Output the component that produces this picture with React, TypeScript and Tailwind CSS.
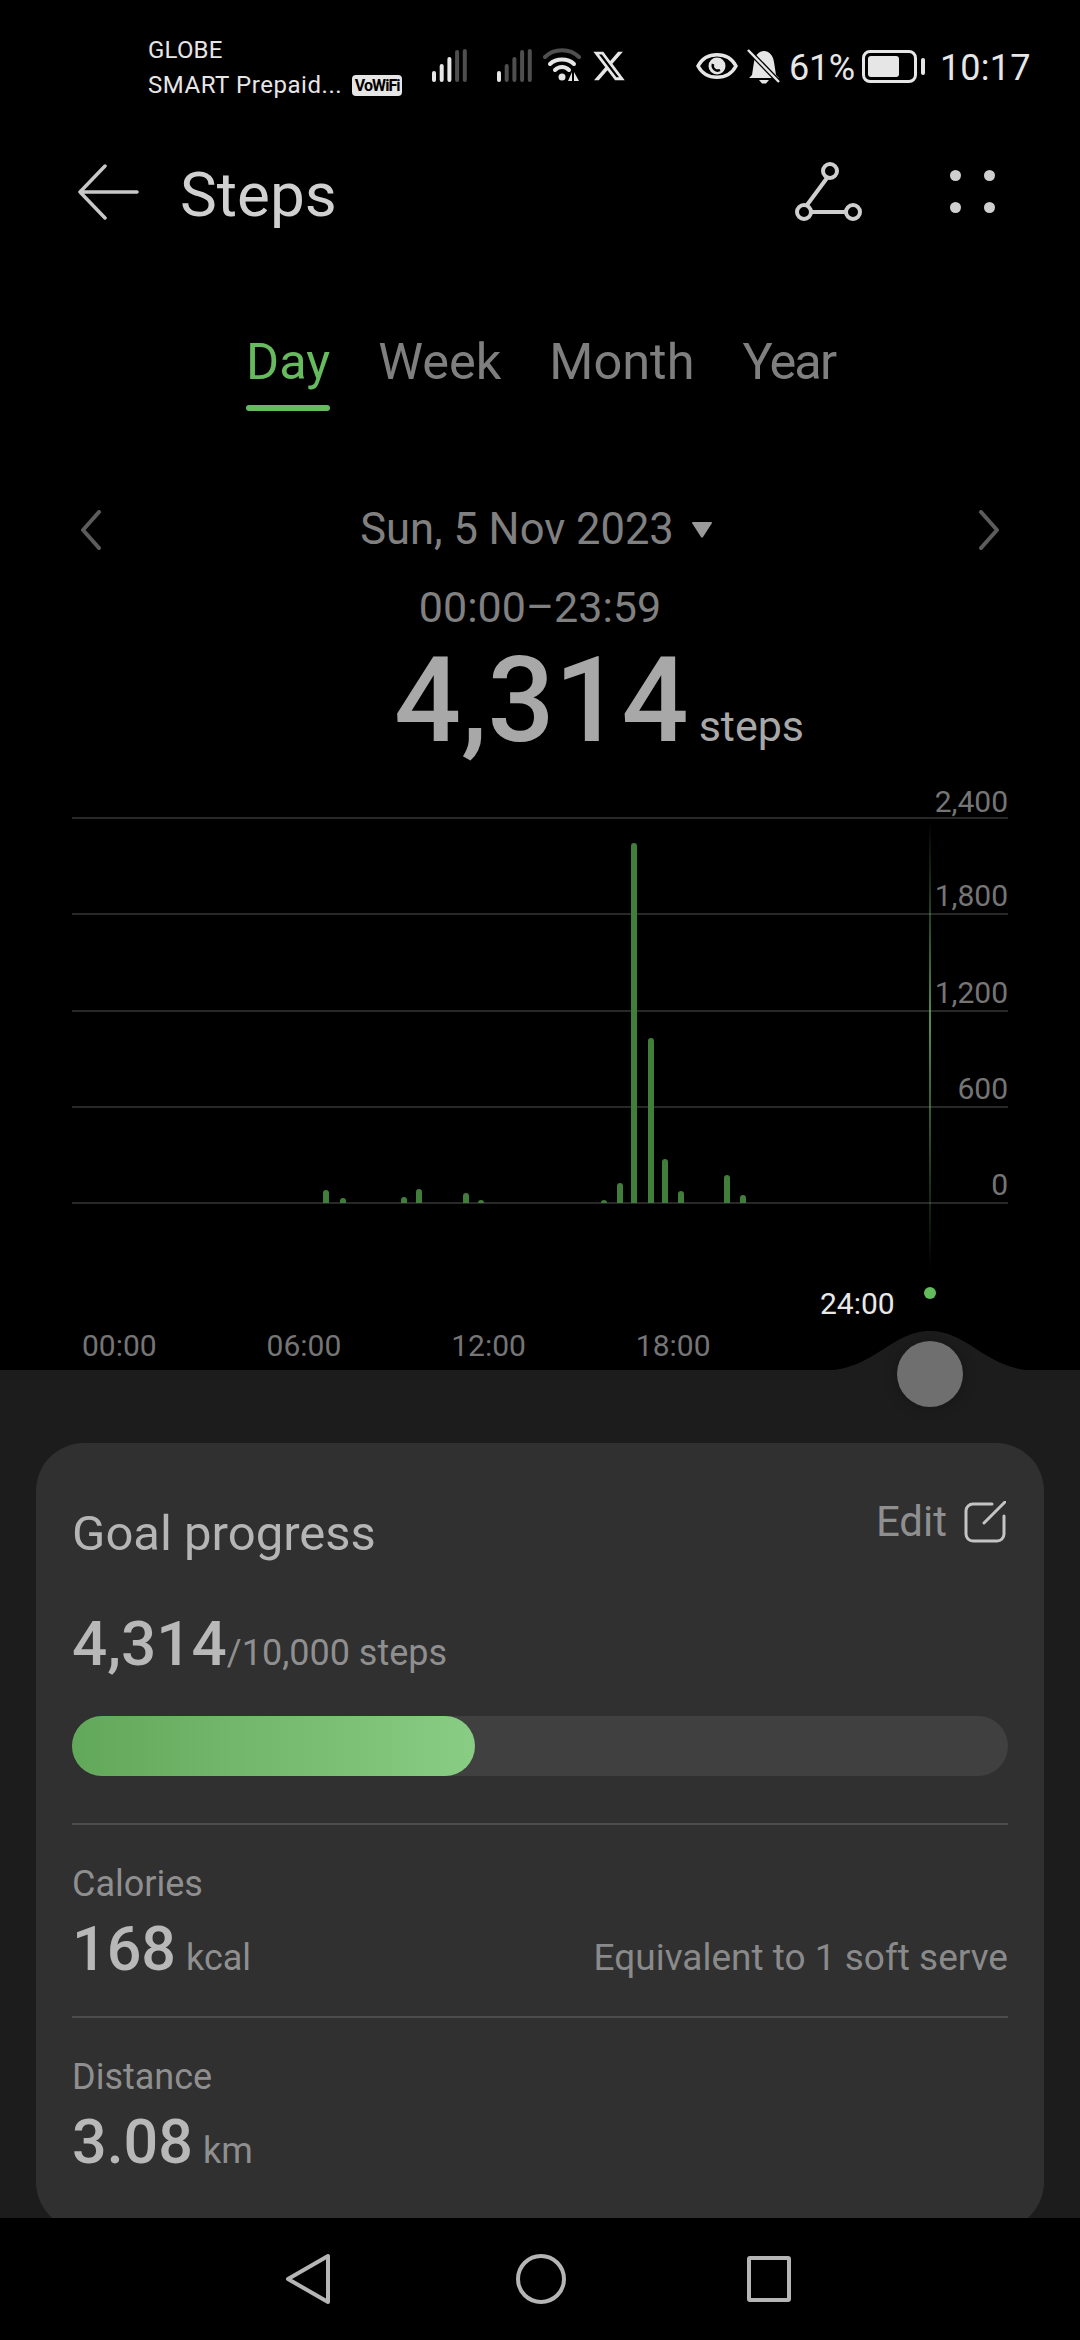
import React from 'react';

const GRID_LABELS = ['1,800', '1,200', '600', '0'];
const TIME_LABELS = ['00:00', '06:00', '12:00', '18:00'];
const TABS = ['Day', 'Week', 'Month', 'Year'];

// hourly bars as [x centre, top y], baseline is the 0 grid line
const BARS: [number, number][] = [
    [326, 1190], [343, 1198], [404, 1197], [419, 1189], [466, 1193], [481, 1200], [604, 1200],
    [620, 1183], [634, 843], [651, 1038], [665, 1159], [681, 1191], [727, 1175], [743, 1195],
];

function SignalBars({ lit }: { lit: number }) {
    const heights = [11, 18, 25, 32, 33];
    return (
        <svg width="36" height="34" viewBox="0 0 36 34">
            {heights.map((h, i) => (
                <rect key={i} x={i * 7.7} y={34 - h} width="4" height={h} rx="2" fill={i < lit ? '#e6e6e6' : '#4f4f4f'} />
            ))}
        </svg>
    );
}

function StatusBar() {
    return (
        <div className="h-[112px] shrink-0 flex items-start text-[#e6e6e6]">
            <div className="w-[432px] pl-[148px] pt-[34px] text-[24px] leading-[33px] tracking-[0.2px] shrink-0">
                <div>GLOBE</div>
                <div className="mt-[2px] flex items-center">
                    <span className="tracking-[0.55px]">SMART Prepaid...</span>
                    <span className="ml-[10px] w-[50px] h-[21px] rounded-[4px] bg-[#e6e6e6] text-black text-[16px] leading-[21px] font-bold text-center tracking-[-0.9px]">VoWiFi</span>
                </div>
            </div>
            <div className="pt-[48px] flex items-center gap-[29px]">
                <SignalBars lit={3} />
                <SignalBars lit={1} />
            </div>
            <svg className="mt-[48px] ml-[10px]" width="38" height="34" viewBox="0 0 38 34" fill="none">
                <path d="M2 9 C11 0 27 0 36 9" stroke="#4f4f4f" strokeWidth="4" strokeLinecap="round" />
                <path d="M7 16 C13 10 25 10 31 16" stroke="#e6e6e6" strokeWidth="4" strokeLinecap="round" />
                <path d="M12 22 C16 18 22 18 26 22" stroke="#e6e6e6" strokeWidth="4" strokeLinecap="round" />
                <circle cx="19" cy="29" r="3.5" fill="#e6e6e6" />
                <path d="M29 24 V33 H25 Z M31 24 V33 H36 Z" fill="#e6e6e6" />
            </svg>
            <svg className="mt-[51px] ml-[12px]" width="32" height="30" viewBox="1 2 22 20" fill="#e6e6e6">
                <path d="M18.244 2.25h3.308l-7.227 8.26 8.502 11.24H16.17l-5.214-6.817L4.99 21.75H1.68l7.73-8.835L1.254 2.25H8.08l4.713 6.231zm-1.161 17.52h1.833L7.084 4.126H5.117z" />
            </svg>
            <svg className="mt-[52px] ml-[71px]" width="42" height="28" viewBox="0 0 42 28" fill="none">
                <path d="M2 14 C10 -1 32 -1 40 14 C32 29 10 29 2 14 Z" stroke="#e6e6e6" strokeWidth="3.5" />
                <circle cx="21" cy="14" r="8.5" fill="#e6e6e6" />
                <path d="M17 12 a5 5 0 0 0 7 6" stroke="#000" strokeWidth="2.5" />
            </svg>
            <svg className="mt-[49px] ml-[9px]" width="33" height="35" viewBox="0 0 33 35" fill="none">
                <path d="M5 26 L7 13 C8 6 12 2 17 2 C22 2 26 6 27 13 L29 26 L32 29 H2 Z" fill="#e6e6e6" />
                <path d="M12 31 H22 L19 34.5 H15 Z" fill="#e6e6e6" />
                <path d="M1 1 L32 33" stroke="#000" strokeWidth="5" />
                <path d="M1 1 L32 33" stroke="#e6e6e6" strokeWidth="2.5" />
            </svg>
            <span className="mt-[46px] ml-[9px] text-[36px] leading-[44px] tracking-[-0.3px]">61%</span>
            <div className="mt-[50px] ml-[7px] w-[55px] h-[33px] rounded-[8px] border-[3px] border-[#e6e6e6] p-[3px] shrink-0">
                <div className="w-[31px] h-full rounded-[3px] bg-[#e6e6e6]" />
            </div>
            <div className="mt-[58px] ml-[4px] w-[4px] h-[17px] rounded-full bg-[#e6e6e6]" />
            <span className="mt-[46px] ml-[15px] text-[36px] leading-[44px] tracking-[0.2px]">10:17</span>
        </div>
    );
}

function Header() {
    return (
        <div className="h-[166px] shrink-0 flex items-center text-[#d0d0d0]">
            <svg className="ml-[77px] shrink-0 -mt-[6px]" width="62" height="56" viewBox="0 0 62 56" fill="none" stroke="#c8c8c8" strokeWidth="3.5" strokeLinecap="round" strokeLinejoin="round">
                <path d="M60 28 H3 M28 2 L3 28 L28 54" />
            </svg>
            <span className="ml-[41px] text-[62px] leading-[70px]">Steps</span>
            <svg className="ml-[456px] shrink-0 -mt-[6px]" width="70" height="62" viewBox="0 0 70 62" fill="none" stroke="#cfcfcf" strokeWidth="4">
                <circle cx="37" cy="10" r="7" />
                <circle cx="11" cy="51" r="7" />
                <circle cx="60" cy="51" r="7" />
                <path d="M34 17 L14 44 M18 51 H53" />
            </svg>
            <div className="ml-[87px] w-[45px] grid grid-cols-2 gap-x-[23px] gap-y-[21px] -mt-[8px]">
                <div className="w-[11px] h-[11px] rounded-full bg-[#cfcfcf]" />
                <div className="w-[11px] h-[11px] rounded-full bg-[#cfcfcf]" />
                <div className="w-[11px] h-[11px] rounded-full bg-[#cfcfcf]" />
                <div className="w-[11px] h-[11px] rounded-full bg-[#cfcfcf]" />
            </div>
        </div>
    );
}

function Tabs() {
    return (
        <div className="pt-[54px] pl-[246px] flex gap-[48px] shrink-0">
            {TABS.map((t, i) => (
                <div key={t} className="flex flex-col">
                    <span className={`text-[50.5px] leading-[60px] ${i === 0 ? 'text-[#66bb5f]' : 'text-[#7f7f7f]'} ${i === 3 ? 'tracking-[-1.8px]' : ''}`}>{t}</span>
                    {i === 0 && <div className="mt-[13px] h-[6px] rounded-full bg-[#66bb5f]" />}
                </div>
            ))}
        </div>
    );
}

function Chevron({ flip }: { flip?: boolean }) {
    return (
        <svg className={flip ? 'rotate-180' : ''} width="22" height="40" viewBox="0 0 22 40" fill="none" stroke="#5c5c5c" strokeWidth="4" strokeLinecap="round" strokeLinejoin="round">
            <path d="M19 2 L3 20 L19 38" />
        </svg>
    );
}

function DateBlock() {
    return (
        <div className="shrink-0 text-[#808080]">
            <div className="mt-[94px] h-[50px] px-[80px] flex items-center justify-between">
                <Chevron />
                <div className="mr-[8px] flex items-center gap-[18px]">
                    <span className="text-[43.5px] leading-[50px]">Sun, 5 Nov 2023</span>
                    <svg width="20" height="16" viewBox="0 0 20 16"><path d="M0 1 Q0 0 1 0 H19 Q20 0 20 1 L11 15 Q10 16 9 15 Z" fill="#9a9a9a" /></svg>
                </div>
                <Chevron flip />
            </div>
            <div className="mt-[27px] h-[50px] text-center text-[43px] leading-[50px]">00:00–23:59</div>
            <div className="h-[139px] pl-[394px] flex items-baseline text-[#a8a8a8]">
                <span className="text-[118px] leading-[139px] font-medium">4,314</span>
                <span className="ml-[10px] text-[43px]">steps</span>
            </div>
        </div>
    );
}

function Chart() {
    return (
        <div className="relative shrink-0 h-[599px] text-[#757575] text-[30px]">
            <div className="mx-[72px]">
                <div className="h-[48px] border-b-2 border-[#282828] text-right leading-[34px] pt-[14px]">2,400</div>
                {GRID_LABELS.map((l) => (
                    <div key={l} className="h-[96.25px] border-b-2 border-[#282828] flex items-end justify-end leading-[34px]">{l}</div>
                ))}
            </div>
            <svg className="absolute left-0 top-0" width="1080" height="599" viewBox="0 771 1080 599" fill="none">
                <defs>
                    <linearGradient id="cursor" x1="0" y1="0" x2="0" y2="1">
                        <stop offset="0" stopColor="#6fc167" stopOpacity="0" />
                        <stop offset="0.45" stopColor="#6fc167" stopOpacity="0.75" />
                        <stop offset="1" stopColor="#6fc167" stopOpacity="0" />
                    </linearGradient>
                </defs>
                {BARS.map(([x, top]) => (
                    <path key={x} d={`M${x - 3} 1203 V${top + 3} a3 3 0 0 1 6 0 V1203 Z`} fill="#417d3b" />
                ))}
                <rect x="929" y="820" width="2" height="450" fill="url(#cursor)" />
                <circle cx="930" cy="1293" r="6" fill="#62bb5c" />
            </svg>
            <span className="absolute left-[820px] top-[516px] leading-[34px] text-[#e8e8e8]">24:00</span>
            <div className="mt-[125px] pl-[82px] flex leading-[34px]">
                {TIME_LABELS.map((t) => (
                    <span key={t} className="w-[184.6px]">{t}</span>
                ))}
            </div>
        </div>
    );
}

function Metric({ label, value, unit, note }: { label: string; value: string; unit: string; note?: string }) {
    return (
        <div className="h-[193px] border-t-2 border-[#4c4c4c]">
            <div className="mt-[37px] text-[36px] leading-[44px] text-[#8f8f8f]">{label}</div>
            <div className="mt-[7px] flex items-baseline justify-between">
                <div className="flex items-baseline">
                    <span className="text-[61px] leading-[72px] font-medium text-[#b8b8b8]">{value}</span>
                    <span className="ml-[10px] text-[36px] text-[#8f8f8f]">{unit}</span>
                </div>
                {note && <span className="text-[37px] text-[#8a8a8a]">{note}</span>}
            </div>
        </div>
    );
}

function Panel() {
    return (
        <div className="relative h-[848px] shrink-0 bg-[#1c1c1c] pt-[73px]">
            <svg className="absolute left-[820px] top-[-40px]" width="220" height="41" viewBox="0 0 220 41">
                <path d="M0 41 C55 41 70 1 110 1 C150 1 165 41 220 41 Z" fill="#1c1c1c" />
            </svg>
            <div className="absolute left-[897px] top-[-29px] w-[66px] h-[66px] rounded-full bg-[#6f6f6f] shadow-[0_0_14px_rgba(0,0,0,0.25)]" />
            <div className="mx-[36px] h-[787px] rounded-[48px] bg-[#303030] px-[36px]">
                <div className="h-[143px] relative">
                    <div className="pt-[66px] text-[49px] leading-[50px] font-normal text-[#b5b5b5]">Goal progress</div>
                    <div className="absolute right-[2px] top-[54px] flex items-center gap-[17px]">
                        <span className="text-[42px] leading-[50px] text-[#8f8f8f]">Edit</span>
                        <svg width="42" height="42" viewBox="0 0 42 42" fill="none" stroke="#c4c4c4" strokeWidth="3" strokeLinecap="round">
                            <path d="M28 3 H9 a7 7 0 0 0 -7 7 V33 a7 7 0 0 0 7 7 H33 a7 7 0 0 0 7 -7 V15" />
                            <path d="M41 1 L20 22" />
                        </svg>
                    </div>
                </div>
                <div className="h-[130px] pt-[22px] flex items-baseline">
                    <span className="text-[62px] leading-[72px] font-medium text-[#b8b8b8]">4,314</span>
                    <span className="text-[36px] text-[#8f8f8f]">/10,000 steps</span>
                </div>
                <div className="h-[60px] rounded-full bg-[#404040]">
                    <div className="h-full w-[403px] rounded-full bg-gradient-to-r from-[#62a85a] to-[#89cc83]" />
                </div>
                <div className="h-[47px]" />
                <Metric label="Calories" value="168" unit="kcal" note="Equivalent to 1 soft serve" />
                <Metric label="Distance" value="3.08" unit="km" />
            </div>
        </div>
    );
}

function NavBar() {
    return (
        <div className="relative z-10 h-[122px] shrink-0 bg-black flex items-center pl-[285px]">
            <svg width="46" height="52" viewBox="0 0 46 52" fill="none" stroke="#b5b5b5" strokeWidth="4" strokeLinejoin="round">
                <path d="M43 3 V49 L3 26 Z" />
            </svg>
            <div className="ml-[185px] w-[50px] h-[50px] rounded-full border-[4px] border-[#b5b5b5]" />
            <div className="ml-[181px] w-[44px] h-[46px] rounded-[3px] border-[4px] border-[#b5b5b5]" />
        </div>
    );
}

export default function App() {
    return (
        <div className="w-[1080px] h-[2340px] overflow-hidden bg-black flex flex-col font-['Roboto',sans-serif]">
            <StatusBar />
            <Header />
            <Tabs />
            <DateBlock />
            <Chart />
            <Panel />
            <NavBar />
        </div>
    );
}
